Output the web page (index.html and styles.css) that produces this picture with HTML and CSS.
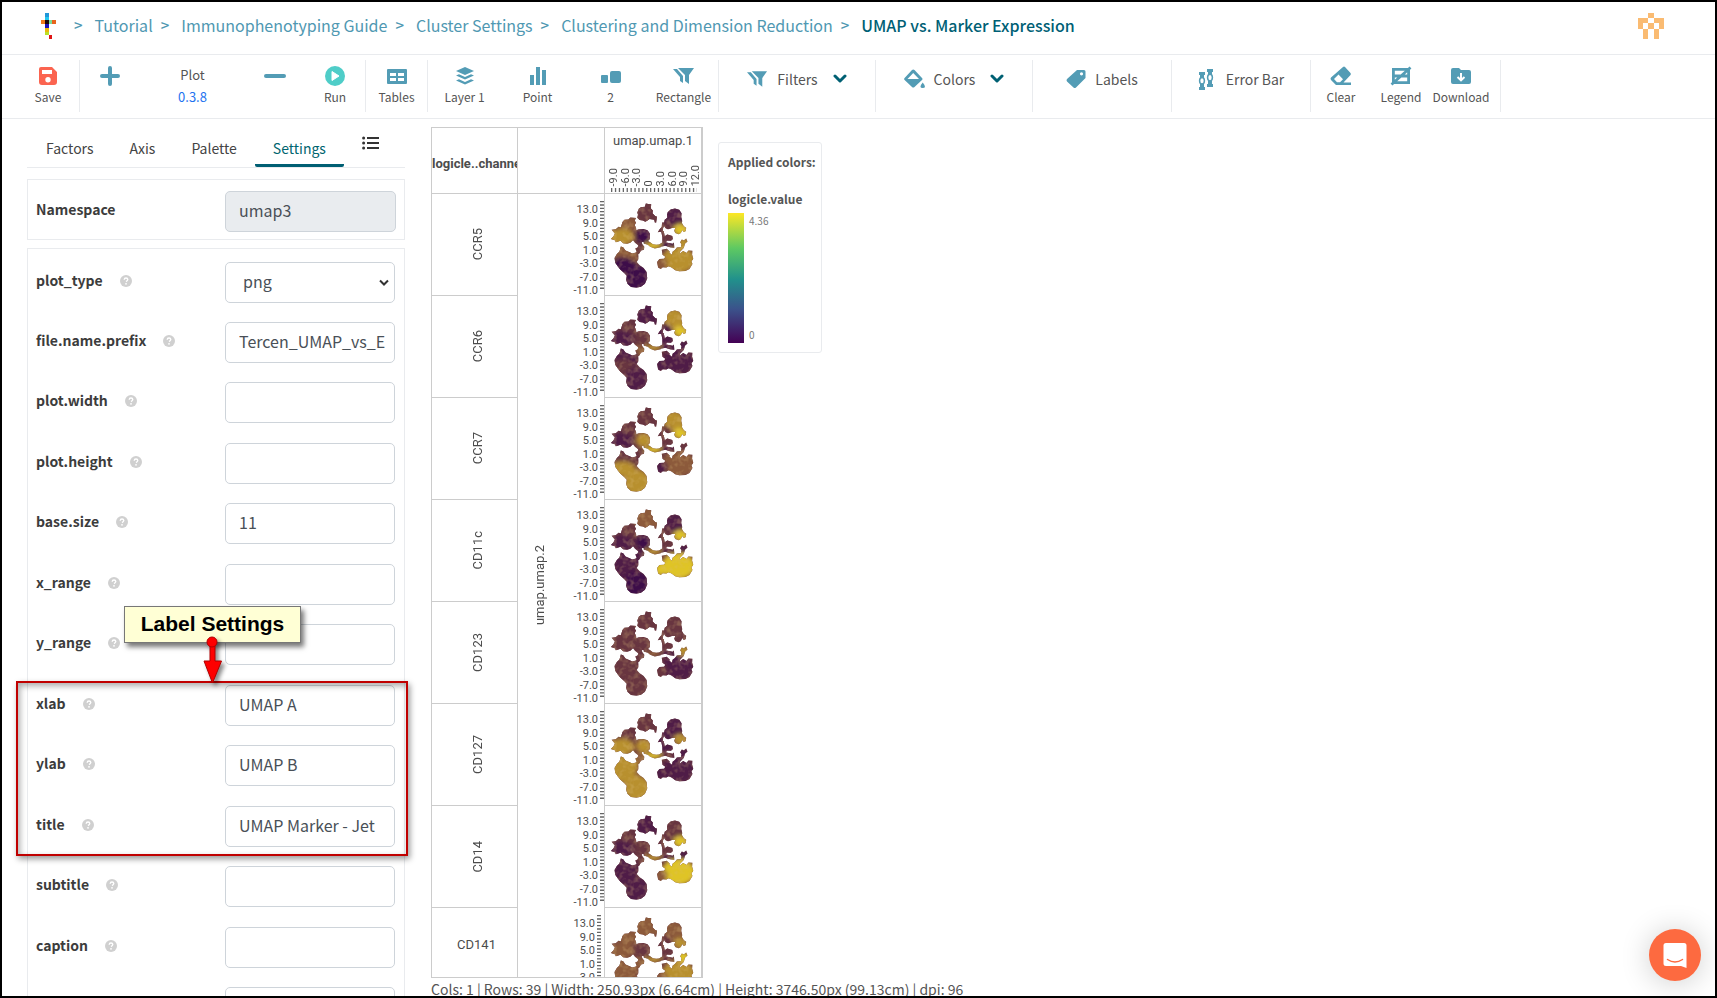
FILE: index.html
```html
<!DOCTYPE html>
<html lang="en">
<head>
<meta charset="utf-8">
<title>UMAP vs. Marker Expression</title>
<link rel="stylesheet" href="styles.css">
</head>
<body>
<div class="app">
  <header class="topbar">
    <a class="logo" href="#" aria-label="Home">
      <svg width="16" height="26" viewBox="0 0 16 26" shape-rendering="crispEdges">
        <path fill="#2196d8" d="M4 0h4v4H4z"/><path fill="#22c6ee" d="M4 4h4v3H4z"/>
        <path fill="#f07a1c" d="M0 7h4v4H0z"/><path fill="#1c0508" d="M4 7h4v4H4z"/><path fill="#7bdc9a" d="M8 7h3v4H8z"/><path fill="#e8631c" d="M11 7h4v4h-4z"/>
        <path fill="#1b10b8" d="M4 11h4v4H4z"/><path fill="#e8b80c" d="M4 15h4v4H4z"/><path fill="#b9e028" d="M4 19h4v3H4z"/><path fill="#e01515" d="M8 22h3v4H8z"/>
      </svg>
    </a>
    <nav class="crumbs" aria-label="Breadcrumb">
      <span class="sep">&gt;</span><a href="#">Tutorial</a>
      <span class="sep">&gt;</span><a href="#">Immunophenotyping Guide</a>
      <span class="sep">&gt;</span><a href="#">Cluster Settings</a>
      <span class="sep">&gt;</span><a href="#">Clustering and Dimension Reduction</a>
      <span class="sep">&gt;</span><a class="current" href="#">UMAP vs. Marker Expression</a>
    </nav>
    <button class="avatar" type="button" aria-label="Account">
      <svg width="26" height="26" viewBox="0 0 5 5" shape-rendering="crispEdges"><path fill="#fabb72" d="M2 0h1v1H2zM0 1h2v1H1v1H0zM3 1h2v2H4V2H3zM2 2h1v1H2zM1 3h1v2H1zM3 3h1v2H3z"/></svg>
    </button>
  </header>

  <div class="toolbar" role="toolbar">
    <div class="group g-save">
      <button class="tool" type="button"><svg width="20" height="20" viewBox="0 0 20 20"><path fill="#fb6450" fill-rule="evenodd" d="M3 1h11l5 5v10a3 3 0 0 1-3 3H4a3 3 0 0 1-3-3V3a2 2 0 0 1 2-2zm1 3v4h10V4zm6 7a2.700 2.700 0 1 0 0 5.400 2.700 2.700 0 0 0 0-5.400z"/></svg><span>Save</span></button>
    </div>
    <div class="group g-plot">
      <button class="tool icon-only" type="button" aria-label="Add"><svg width="22" height="22" viewBox="0 0 22 22"><path stroke="#539cb5" stroke-width="4" stroke-linecap="round" d="M11 3v16M3 11h16"/></svg></button>
      <div class="step"><span>Plot</span><a href="#">0.3.8</a></div>
      <button class="tool icon-only" type="button" aria-label="Remove"><svg width="22" height="22" viewBox="0 0 22 22"><path stroke="#539cb5" stroke-width="4" stroke-linecap="round" d="M2 11h18"/></svg></button>
      <button class="tool" type="button"><svg width="20" height="20" viewBox="0 0 20 20"><circle cx="10" cy="10" r="10" fill="#4fcdc8"/><path fill="#fff" stroke="#fff" stroke-linejoin="round" d="M7 5.500v9l7-4.500z"/></svg><span>Run</span></button>
    </div>
    <div class="group g-tables">
      <button class="tool" type="button"><svg width="20" height="20" viewBox="0 0 20 20"><path fill="#539cb5" fill-rule="evenodd" d="M1 3h18a1 1 0 0 1 1 1v13a1 1 0 0 1-1 1H1a1 1 0 0 1-1-1V4a1 1 0 0 1 1-1zm2 4v3h6V7zm8 0v3h6V7zm-8 5v3h6v-3zm8 0v3h6v-3z"/></svg><span>Tables</span></button>
    </div>
    <div class="group g-layer">
      <button class="tool" type="button"><svg width="20" height="20" viewBox="0 0 20 20"><g fill="#539cb5"><path d="M10 1l9 4-9 4-9-4z"/><path d="M1 9.500l3-1.300 6 2.700 6-2.700 3 1.300-9 4z"/><path d="M1 14.500l3-1.300 6 2.700 6-2.700 3 1.300-9 4z"/></g></svg><span>Layer 1</span></button>
      <button class="tool" type="button"><svg width="20" height="20" viewBox="0 0 20 20"><path fill="#539cb5" d="M2 9h4v10H2zM8 1h4v18H8zM14 4h4v15h-4z"/></svg><span>Point</span></button>
      <button class="tool" type="button"><svg width="20" height="20" viewBox="0 0 20 20"><rect y="9" width="7" height="8" rx="1" fill="#539cb5"/><rect x="9" y="5" width="11" height="12" rx="2" fill="#539cb5"/></svg><span>2</span></button>
      <button class="tool" type="button"><svg width="22" height="20" viewBox="0 0 22 20"><path fill="#539cb5" d="M5 2h16l-5 7v9l-4-3V9zM0 3h4l6 7v7l-3-2v-4z"/></svg><span>Rectangle</span></button>
    </div>
    <div class="group g-wide g-menu">
      <button class="row-tool" type="button"><svg width="21" height="20" viewBox="0 0 22 20"><path fill="#539cb5" d="M5 2h16l-5 7v9l-4-3V9zM0 3h4l6 7v7l-3-2v-4z"/></svg><span>Filters</span><svg class="chev" width="14" height="10" viewBox="0 0 14 10"><path d="M2 2l5 5 5-5"/></svg></button>
    </div>
    <div class="group g-wide g-menu">
      <button class="row-tool" type="button"><svg width="21" height="20" viewBox="0 0 21 20"><path fill="#539cb5" fill-rule="evenodd" d="M8 1q1.200-1 2.500 0l7.500 8q1 1 0 2l-7.500 7q-1.300 1-2.500 0L.6 11q-1-1 0-2zm1.200 3L3.500 10h11.500zM18.700 13.500q4.500 5.500 0 5.500t0-5.500z"/></svg><span>Colors</span><svg class="chev" width="14" height="10" viewBox="0 0 14 10"><path d="M2 2l5 5 5-5"/></svg></button>
    </div>
    <div class="group g-single">
      <button class="row-tool" type="button"><svg width="20" height="20" viewBox="0 0 20 20"><path fill="#539cb5" fill-rule="evenodd" d="M11 1h7a1.500 1.500 0 0 1 1.500 1.500V9L10 18.500q-1.300 1-2.500 0L1 12.500q-1-1.200 0-2.500zm4.500 2.200a1.600 1.600 0 1 0 0 3.200 1.600 1.600 0 0 0 0-3.200z"/></svg><span>Labels</span></button>
    </div>
    <div class="group g-single">
      <button class="row-tool wide-gap" type="button"><svg width="16" height="22" viewBox="0 0 16 22"><path fill="#539cb5" d="M1 4h6v3H6v12h1v3H1v-3h1V7H1zM9 1h6v3h-1v12h1v3H9v-3h1V4H9z"/><g fill="#fff" stroke="#539cb5" stroke-width="1.500"><ellipse cx="4" cy="12.800" rx="2.400" ry="3.300"/><ellipse cx="12" cy="9.600" rx="2.400" ry="3.300"/></g></svg><span>Error Bar</span></button>
    </div>
    <div class="group g-out">
      <button class="tool" type="button"><svg width="22" height="20" viewBox="0 0 22 20"><path fill="#539cb5" fill-rule="evenodd" d="M13 1q1-.8 2 0l5.500 6q.8 1 0 2l-7 7.500H21V19H6l-5-5q-1-1.200 0-2.500zM8.500 8.500L4 13l3 3.200h3l3-3z"/></svg><span>Clear</span></button>
      <button class="tool" type="button"><svg width="22" height="20" viewBox="0 0 22 20"><path fill="none" stroke="#539cb5" stroke-width="2.800" d="M3.400 3.400h15.200v13.200H3.400zM3 10h16M1.500 18.500l19-17"/></svg><span>Legend</span></button>
      <button class="tool" type="button"><svg width="20" height="20" viewBox="0 0 20 20"><path fill="#539cb5" d="M2 2h6l2 2h8a2 2 0 0 1 2 2v10a2 2 0 0 1-2 2H2a2 2 0 0 1-2-2V4a2 2 0 0 1 2-2z"/><path fill="none" stroke="#fff" stroke-width="2" d="M10 7v7M6.500 11l3.500 3.300 3.500-3.300"/></svg><span>Download</span></button>
    </div>
  </div>

  <div class="body">
    <aside class="panel">
      <div class="tabs" role="tablist">
        <button class="tab" role="tab" type="button">Factors</button>
        <button class="tab" role="tab" type="button">Axis</button>
        <button class="tab" role="tab" type="button">Palette</button>
        <button class="tab active" role="tab" type="button" aria-selected="true">Settings</button>
        <button class="tab list" type="button" aria-label="List"><svg width="17" height="14" viewBox="0 0 17 14"><path stroke="#333" stroke-width="2" d="M5 2h12M5 7h12M5 12h12"/><g fill="#333"><circle cx="1.600" cy="2" r="1.500"/><circle cx="1.600" cy="7" r="1.500"/><circle cx="1.600" cy="12" r="1.500"/></g></svg></button>
      </div>
      <div class="card namespace">
        <label for="ns">Namespace</label>
        <input id="ns" class="control" value="umap3" readonly>
      </div>
      <div class="card fields" id="fields"></div>
      <div class="highlight"></div>
      <div class="callout">Label Settings</div>
      <svg class="arrow" width="28" height="48" viewBox="0 0 28 48"><path d="M11 8h5v18h6.500L13.500 48 5 26h6z" fill="#fe0000" stroke="#b00000"/><circle cx="13" cy="7" r="5" fill="#fe0000" stroke="#b00000"/></svg>
    </aside>

    <main class="canvas">
      <div class="view">
        <div class="chart">
          <div class="head-cell factor-name"><span>logicle..channel</span></div>
          <div class="head-cell"></div>
          <div class="head-cell x-axis">
            <div class="x-title">umap.umap.1</div>
            <div class="x-labels"><span>-9.0</span><span>-6.0</span><span>-3.0</span><span>0</span><span>3.0</span><span>6.0</span><span>9.0</span><span>12.0</span></div>
            <svg class="x-ticks" width="96" height="5"><path d="M6 2h86" stroke="#666" stroke-width="4" stroke-dasharray="1.300 2.600"/></svg>
          </div>
          <div class="names" id="names"></div>
          <div class="y-axis"><div class="y-title"><span>umap.umap.2</span></div><div class="scales" id="scales"></div></div>
          <div class="plots" id="plots"></div>
        </div>
        <section class="legend">
          <h2>Applied colors:</h2>
          <h3>logicle.value</h3>
          <div class="scale"><div class="ramp"></div><div class="bounds"><span>4.36</span><span>0</span></div></div>
        </section>
      </div>
      <p class="status">Cols: 1 | Rows: 39 | Width: 250.93px (6.64cm) | Height: 3746.50px (99.13cm) | dpi: 96</p>
    </main>
  </div>

  <button class="chat" type="button" aria-label="Open chat"><svg width="24" height="27" viewBox="0 0 24 27"><path fill="#fff" d="M3 1h18a2.500 2.500 0 0 1 2.500 2.500V26L18 24H3a2.500 2.500 0 0 1-2.500-2.500v-18A2.500 2.500 0 0 1 3 1z"/><path fill="none" stroke="#fd6a40" stroke-width="1.500" stroke-linecap="round" d="M4.500 17.500q7.500 5 15 0"/></svg></button>
</div>

<svg class="defs" width="0" height="0" aria-hidden="true">
  <defs>
    <clipPath id="cells">
      <path d="M137 38L144 40 153 41 152 54 158 60 157 68 165 77 171 79 168 97 164 96 162 88 148 86 142 90 135 94 128 90 118 89 111 82 113 73 111 66 116 54 122 50 134 49z"/>
      <path d="M203 65L212 57 225 54 238 58 245 68 244 80 247 92 246 98 252 108 259 112 258 122 252 125 247 119 243 128 236 132 226 128 223 121 226 113 216 113 204 117 196 113 192 106 189 114 188 126 180 124 173 126 179 116 185 110 186 96 192 96 194 88 202 82 201 74z"/>
      <path d="M66 95L72 88 84 87 90 81 107 83 103 90 107 97 103 104 107 112 108 120 115 117 130 116 142 120 149 130 149 146 143 153 132 157 124 155 126 162 132 170 131 179 122 181 118 189 110 197 103 194 109 184 105 175 112 172 114 165 104 158 98 150 90 158 80 161 68 159 60 152 46 156 43 150 31 146 39 138 43 130 33 118 46 116 54 109 61 111z"/>
      <path d="M138 150L150 156 158 162 168 164 181 163 182 171 164 175 150 170 143 164 130 160z"/>
      <path d="M183 122L191 122 194 138 202 133 217 137 219 146 213 152 200 151 198 157 218 161 222 157 223 173 210 171 196 167 178 171 177 163 187 157 187 140z"/>
      <path d="M222 184L231 172 243 171 245 162 241 156 246 148 252 151 259 145 263 154 255 161 252 173 241 184 230 191z"/>
      <path d="M61 169L68 171 75 181 84 185 96 190 108 187 114 196 114 208 109 216 118 226 130 234 139 246 141 265 134 282 122 291 108 294 92 292 81 282 77 270 79 258 71 249 59 239 52 230 44 218 42 204 49 192 57 184z"/>
      <path d="M185 179L200 176 209 184 208 188 216 194 218 185 229 177 240 184 240 190 250 183 260 189 266 181 278 182 277 194 281 206 275 214 278 222 269 237 257 243 238 244 226 241 215 233 206 229 199 233 188 232 182 237 174 233 171 216 178 207 192 206 196 200 187 194z"/>
    </clipPath>
    <filter id="soft" x="-20%" y="-20%" width="140%" height="140%"><feGaussianBlur stdDeviation="6"/></filter>
    <filter id="grain" x="0" y="0" width="100%" height="100%"><feTurbulence type="fractalNoise" baseFrequency="0.060" numOctaves="2" seed="4"/><feColorMatrix values="0 0 0 0 0.720  0 0 0 0 0.500  0 0 0 0 0.200  3 0 0 0 -1.300"/></filter>
  </defs>
</svg>
<script src="app.js"></script>
</body>
</html>
```
FILE: styles.css
```css
* { box-sizing: border-box; }
body {
  margin: 0;
  font-family: "Noto Sans CJK SC", "Noto Sans", sans-serif;
  font-size: 14px;
  color: #4a4a4a;
  background: #fff;
}
button { font: inherit; color: inherit; background: none; border: 0; padding: 0; cursor: pointer; }
a { color: inherit; text-decoration: none; }
.defs { position: absolute; }

.app {
  display: flex;
  flex-direction: column;
  height: 100vh;
  border: 2px solid #000;
  overflow: hidden;
}

/* Top bar */
.topbar {
  display: flex;
  align-items: center;
  flex: none;
  height: 53px;
  padding: 0 51px 4px 39px;
  border-bottom: 1px solid #e9ebee;
}
.logo, .avatar, .logo svg, .avatar svg { display: block; }
.crumbs { display: flex; flex: 1; margin-left: 17px; padding-bottom: 2px; font-size: 16px; line-height: 22px; color: #4f98b2; white-space: nowrap; }
.crumbs .sep { font-weight: 500; font-size: 15px; margin-right: 12px; }
.crumbs a { margin-right: 8px; }
.crumbs .current { color: #005f75; font-weight: 500; }

/* Toolbar */
.toolbar {
  display: flex;
  flex: none;
  height: 64px;
  padding: 5px 0 6px;
  border-bottom: 1px solid #e9ebee;
  font-size: 12px;
  line-height: 20px;
  color: #555;
}
.group { display: flex; flex: none; border-right: 1px solid #e9ebee; }
.tool { display: flex; flex: 1; flex-direction: column; align-items: center; padding-top: 6px; gap: 1px; white-space: nowrap; }
.tool svg { display: block; }
.g-save { width: 78px; padding-left: 15px; }
.g-plot { width: 286px; }
.g-plot .tool { flex: 0 0 60px; }
.g-plot .icon-only { padding-top: 5px; }
.step { display: flex; flex: 1; flex-direction: column; align-items: center; padding-top: 5px; gap: 2px; font-size: 13px; }
.step a { color: #1e73f0; }
.g-tables { width: 62px; }
.g-layer { width: 291px; }
.g-layer .tool { flex: 0 0 73px; }
.g-wide { width: 157px; }
.g-single { width: 139px; }
.row-tool { display: flex; align-items: center; flex: 1; justify-content: center; height: 37px; gap: 9px; font-size: 14px; white-space: nowrap; }
.row-tool.wide-gap { gap: 12px; }
.row-tool .chev { margin-left: 6px; fill: none; stroke: #006073; stroke-width: 3; stroke-linecap: round; stroke-linejoin: round; }
.g-out { width: 190px; }
.g-out .tool { flex: 0 0 60px; }

/* Left panel */
.body { display: flex; flex: 1; min-height: 0; }
.panel { position: relative; flex: none; width: 403px; padding-left: 25px; }
.tabs { display: flex; height: 49px; padding-left: 1px; border-bottom: 1px solid #e9ebee; font-size: 14px; }
.tab { padding: 12px 18px 0; border-bottom: 3px solid transparent; color: #444; line-height: 20px; }
.tab.active { color: #00656f; border-bottom-color: #005f73; border-radius: 2px; }
.tab.list { padding-top: 4px; }
.card { border: 1px solid #e9ebee; }
label { font-weight: 700; font-size: 14px; line-height: 20px; color: #3c3c3c; }
.control {
  width: 170px;
  height: 41px;
  padding: 0 6px 3px 13px;
  border: 1px solid #ced4da;
  border-radius: 5px;
  background: #fff;
  font: inherit;
  font-size: 16px;
  color: #495057;
}
.control[readonly] { width: 171px; background: #e9ecef; }
.namespace { display: flex; justify-content: space-between; margin-top: 11px; padding: 11px 8px 6px; height: 61px; }
.namespace label { padding-top: 8px; }
.fields { margin-top: 8px; padding: 13px 9px 0 8px; }
.field { display: flex; align-items: flex-start; height: 60px; }
.field:nth-child(2n+3) { height: 61px; }
.field label { margin-right: 17px; padding-top: 8px; }
.field .help { display: block; margin-top: 13px; }
.field .control { margin-left: auto; }
select.control {
  appearance: none;
  padding-left: 17px;
  background: #fff url("data:image/svg+xml,%3Csvg xmlns='http://www.w3.org/2000/svg' width='12' height='8'%3E%3Cpath d='M2 1.500l4 4 4-4' fill='none' stroke='%23333' stroke-width='2'/%3E%3C/svg%3E") no-repeat right 4px center;
}

/* Annotations laid over the panel */
.highlight { position: absolute; left: 14px; top: 562px; width: 392px; height: 175px; border: 2px solid #c00000; box-shadow: 2px 3px 6px #0006, inset 2px 3px 6px #0005; }
.callout { position: absolute; left: 122px; top: 487px; width: 177px; height: 37px; border: 1px solid #777; background: #ffffd5; box-shadow: 3px 4px 5px #0008; color: #000; font: bold 21px/34px "Liberation Sans", Arial, sans-serif; text-align: center; }
.arrow { position: absolute; left: 197px; top: 516px; filter: drop-shadow(3px 3px 2px #0007); }

/* Crosstab chart */
.canvas { display: flex; flex: 1; flex-direction: column; min-width: 0; padding: 8px 0 0 26px; font-family: Roboto, sans-serif; }
.view { display: flex; flex: 1; min-height: 0; align-items: flex-start; gap: 15px; }
.chart {
  display: grid;
  grid-template-columns: 86px 87px 96px;
  grid-template-rows: 66px minmax(0, 1fr);
  height: 100%;
  overflow: hidden;
  border: 1px solid #ccc;
  border-right-width: 2px;
  color: #4c4c4c;
}
.head-cell { min-width: 0; overflow: hidden; border-bottom: 1px solid #ccc; border-right: 1px solid #ccc; }
.head-cell:nth-child(3) { border-right: 0; }
.factor-name { display: flex; align-items: center; font-weight: 700; font-size: 13px; padding-top: 6px; white-space: nowrap; }
.x-axis { display: flex; flex-direction: column; justify-content: flex-end; }
.x-title { margin-bottom: auto; padding-top: 4px; text-align: center; font-size: 13px; line-height: 18px; }
.x-labels { display: flex; justify-content: space-between; padding: 0 0 2px 3px; font-size: 11px; line-height: 11px; }
.x-labels span { writing-mode: vertical-rl; transform: rotate(180deg); }
.x-ticks { display: block; flex: none; }
.names, .scales, .plots { display: flex; flex-direction: column; min-height: 0; }
.names { border-right: 1px solid #ccc; font-size: 13px; overflow: hidden; }
.name, .plot { height: 102px; flex: none; border-bottom: 1px solid #ccc; }
.name { display: flex; align-items: center; justify-content: center; padding-left: 6px; }
.name span { writing-mode: vertical-rl; transform: rotate(180deg); }
.name:last-child { flex: 1; height: auto; min-height: 0; padding: 4px 0 0 4px; border-bottom: 0; }
.name:last-child span { writing-mode: horizontal-tb; transform: none; }
.y-axis { display: flex; justify-content: space-between; min-height: 0; border-right: 1px solid #ccc; overflow: hidden; }
.y-title { display: flex; align-items: center; padding-left: 14px; font-size: 13px; }
.y-title span { writing-mode: vertical-rl; transform: rotate(180deg); }
.scale-row { display: flex; flex: none; height: 102px; gap: 1px; }
.scale-row ol { display: flex; flex-direction: column; justify-content: space-between; height: 94px; margin: 9px 0 0; padding: 0; list-style: none; font-size: 11px; line-height: 13px; text-align: right; }
.scale-row:last-child ol { height: 67px; }
.plots { overflow: hidden; }
.plot svg { display: block; width: 96px; height: 101px; }

/* Legend */
.legend { width: 104px; height: 211px; margin-top: 15px; padding: 10px 9px; border: 1px solid #e9ebee; border-radius: 3px; font-family: "Noto Sans CJK SC", sans-serif; color: #555; }
.legend h2, .legend h3 { margin: 0; font-size: 12px; line-height: 18px; font-weight: 700; white-space: nowrap; }
.legend h3 { margin-top: 19px; }
.scale { display: flex; gap: 5px; height: 130px; margin-top: 5px; }
.ramp { width: 16px; background: linear-gradient(#fde725, #5ec962 27%, #21918c 51%, #3b528b 74%, #440154); }
.bounds { display: flex; flex-direction: column; justify-content: space-between; font-size: 10px; line-height: 16px; color: #777; }
.status { flex: none; height: 18px; margin: 0; font-family: "Noto Sans CJK SC", sans-serif; font-size: 14px; line-height: 22px; color: #555; white-space: nowrap; }

/* Chat launcher */
.chat { position: absolute; right: 16px; bottom: 17px; display: grid; place-items: center; width: 52px; height: 52px; border-radius: 50%; background: #fd6a40; box-shadow: 0 2px 30px #0003; }
```
FILE: app.js
```js
const fields = [
  ["plot_type", null], ["file.name.prefix", "Tercen_UMAP_vs_E"], ["plot.width", ""],
  ["plot.height", ""], ["base.size", "11"], ["x_range", ""], ["y_range", ""],
  ["xlab", "UMAP A"], ["ylab", "UMAP B"], ["title", "UMAP Marker - Jet"],
  ["subtitle", ""], ["caption", ""]
];
const help = '<svg class="help" width="12" height="12" viewBox="0 0 12 12"><circle cx="6" cy="6" r="6" fill="#d0d0d0"/><path d="M4.200 4.800q.1-1.800 1.800-1.800t1.800 1.500q0 1-1.800 2.100" fill="none" stroke="#fff" stroke-width="1.400"/><circle cx="6" cy="8.800" r=".9" fill="#fff"/></svg>';
document.getElementById("fields").innerHTML = fields.map(([name, value]) => {
  const id = "f-" + name;
  const control = value === null
    ? `<select id="${id}" class="control"><option>png</option></select>`
    : `<input id="${id}" class="control" value="${value}">`;
  return `<div class="field"><label for="${id}">${name}</label>${help}${control}</div>`;
}).join("") + '<div class="field"><input class="control" aria-label="Additional setting"></div>';

// Expression colours: y high, o medium-high, b medium, m medium-low, p low, d lowest.
const shades = { y: "#dfc428", o: "#b8902f", b: "#8c5a3a", m: "#683640", p: "#501c46", d: "#3d084a" };
// Cloud regions: centre x, centre y, radius x, radius y.
const regions = [
  [140, 68, 42, 38],   // top
  [222, 80, 34, 32],   // upper right
  [242, 118, 22, 18],  // upper right foot
  [85, 100, 32, 22],   // left, upper
  [62, 140, 40, 26],   // left, lower
  [130, 137, 24, 22],  // centre
  [116, 178, 22, 20],  // link below centre
  [160, 166, 26, 10],  // link to the right
  [196, 130, 26, 36],  // right stem
  [208, 166, 26, 10],  // stem foot
  [250, 162, 20, 20],  // right link
  [72, 200, 42, 34],   // lower left, upper
  [66, 226, 40, 24],   // lower left, middle
  [110, 265, 40, 40],  // lower left, bottom
  [235, 210, 52, 40],  // lower right
  [182, 220, 20, 20]   // lower right, edge
];
// One shade letter per region, in the order above.
const rows = [
  ["CCR5",  "mpybodmymdobddob"],
  ["CCR6",  "poympmboppppmppp"],
  ["CCR7",  "moympomympmmoobp"],
  ["CD11c", "bpympdpomppppdyy"],
  ["CD123", "mmmmmmmbmpommmpm"],
  ["CD127", "mpomoobypmpooopp"],
  ["CD14",  "pmympmmompppppyb"],
  ["CD141", "bbobbmbommybbbob"]
];

const cloud = (key) => `<svg viewBox="13 10 291 306" preserveAspectRatio="none" aria-hidden="true"><g clip-path="url(#cells)"><rect x="20" y="20" width="275" height="285" fill="#683640"/><g filter="url(#soft)">${
  regions.map(([x, y, rx, ry], i) => `<ellipse cx="${x}" cy="${y}" rx="${rx}" ry="${ry}" fill="${shades[key[i]]}"/>`).join("")
}</g><rect x="20" y="20" width="275" height="285" filter="url(#grain)" opacity=".3"/></g></svg>`;

const ticks = '<svg width="5" height="102"><path d="M3 7v90" stroke="#666" stroke-width="4" stroke-dasharray="1.330 2"/></svg>';
const values = ["13.0", "9.0", "5.0", "1.0", "-3.0", "-7.0", "-11.0"];
const scale = (last) => (last ? values.slice(0, 5) : values).map((t) => `<li>${t}</li>`).join("");

document.getElementById("names").innerHTML = rows.map(([n]) => `<div class="name"><span>${n}</span></div>`).join("");
document.getElementById("scales").innerHTML = rows.map((_, i) => `<div class="scale-row"><ol>${scale(i === rows.length - 1)}</ol>${ticks}</div>`).join("");
document.getElementById("plots").innerHTML = rows.map(([, key]) => `<div class="plot">${cloud(key)}</div>`).join("");
```
